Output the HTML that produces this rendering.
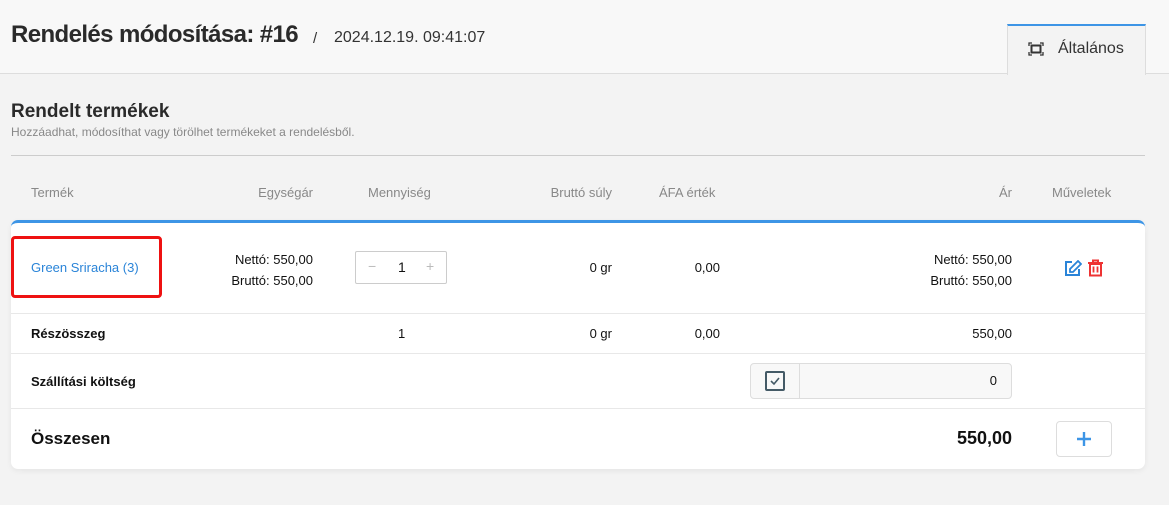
<!DOCTYPE html>
<html><head><meta charset="utf-8"><style>
*{box-sizing:border-box;margin:0;padding:0}
body{width:1169px;height:505px;background:#f3f3f3;font-family:"Liberation Sans",Arial,sans-serif;color:#222;position:relative;overflow:hidden}
.a{position:absolute;white-space:nowrap}
.r{text-align:right}
</style></head><body>
<div class="a" style="left:0;top:0;width:1169px;height:74px;background:#f8f8f8;border-bottom:1px solid #ddd"></div>
<div class="a" style="left:11px;top:21px;font-size:24px;font-weight:bold;color:#2a2a2a;letter-spacing:-0.6px">Rendelés módosítása: #16</div>
<div class="a" style="left:313px;top:30px;font-size:15px;color:#333">/</div>
<div class="a" style="left:334px;top:29px;font-size:16px;color:#333">2024.12.19. 09:41:07</div>
<div class="a" style="left:1007px;top:24px;width:139px;height:51px;background:#f3f3f3;border-top:2px solid #3d95e6;border-left:1px solid #ddd;border-right:1px solid #ddd"></div>
<svg class="a" style="left:1028px;top:42px" width="16" height="14" viewBox="0 0 16 14"><path d="M1 4V1h3M12 1h3v3M15 10v3h-3M4 13H1v-3" fill="none" stroke="#333" stroke-width="1.3"/><rect x="3.5" y="3.5" width="9" height="7" fill="none" stroke="#333" stroke-width="2"/></svg>
<div class="a" style="left:1058px;top:40px;font-size:16px;color:#333">Általános</div>
<div class="a" style="left:11px;top:101px;font-size:19px;font-weight:bold;color:#2a2a2a">Rendelt termékek</div>
<div class="a" style="left:11px;top:125px;font-size:12px;color:#888">Hozzáadhat, módosíthat vagy törölhet termékeket a rendelésből.</div>
<div class="a" style="left:11px;top:155px;width:1134px;height:1px;background:#ccc"></div>
<div class="a" style="left:31px;top:185px;font-size:13px;color:#888">Termék</div>
<div class="a r" style="left:200px;width:113px;top:185px;font-size:13px;color:#888">Egységár</div>
<div class="a" style="left:368px;top:185px;font-size:13px;color:#888">Mennyiség</div>
<div class="a r" style="left:500px;width:112px;top:185px;font-size:13px;color:#888">Bruttó súly</div>
<div class="a" style="left:659px;top:185px;font-size:13px;color:#888">ÁFA érték</div>
<div class="a r" style="left:900px;width:112px;top:185px;font-size:13px;color:#888">Ár</div>
<div class="a" style="left:1052px;top:185px;font-size:13px;color:#888">Műveletek</div>
<div class="a" style="left:11px;top:220px;width:1134px;height:249px;background:#fff;border-top:3px solid #3d95e6;border-radius:7px;box-shadow:0 2px 6px rgba(0,0,0,.06)"></div>
<div class="a" style="left:11px;top:313px;width:1134px;height:1px;background:#e8e8e8"></div>
<div class="a" style="left:11px;top:353px;width:1134px;height:1px;background:#e8e8e8"></div>
<div class="a" style="left:11px;top:408px;width:1134px;height:1px;background:#e8e8e8"></div>
<div class="a" style="left:11px;top:236px;width:151px;height:62px;border:3px solid #e11;border-radius:4px"></div>
<div class="a" style="left:31px;top:260px;font-size:13px;color:#2a84d8">Green Sriracha (3)</div>
<div class="a r" style="left:180px;width:133px;top:249px;font-size:13px;line-height:21px;color:#111">Nettó: 550,00<br>Bruttó: 550,00</div>
<div class="a" style="left:355px;top:251px;width:92px;height:33px;border:1px solid #ccc;border-radius:2px"></div>
<div class="a" style="left:368px;top:258px;font-size:14px;color:#bbb">−</div>
<div class="a" style="left:398px;top:259px;font-size:14px;color:#111">1</div>
<div class="a" style="left:426px;top:258px;font-size:14px;color:#bbb">+</div>
<div class="a r" style="left:500px;width:112px;top:260px;font-size:13px;color:#111">0 gr</div>
<div class="a r" style="left:620px;width:100px;top:260px;font-size:13px;color:#111">0,00</div>
<div class="a r" style="left:850px;width:162px;top:249px;font-size:13px;line-height:21px;color:#111">Nettó: 550,00<br>Bruttó: 550,00</div>
<svg class="a" style="left:1064px;top:260px" width="18" height="17" viewBox="0 0 18 17"><path d="M8 2H2v13h13V9" fill="none" stroke="#2a84d8" stroke-width="2"/><path d="M14 1l3 3-8 8H6V9z" fill="none" stroke="#2a84d8" stroke-width="1.8"/></svg>
<svg class="a" style="left:1087px;top:259px" width="17" height="18" viewBox="0 0 17 18"><path d="M1 4h15M6 4V1.5h5V4" fill="none" stroke="#e33" stroke-width="2"/><rect x="3" y="5" width="11" height="11.5" fill="none" stroke="#e33" stroke-width="2"/><path d="M6.5 7.5v6M10.5 7.5v6" stroke="#e33" stroke-width="1.8"/></svg>
<div class="a" style="left:31px;top:326px;font-size:13px;font-weight:bold;color:#111">Részösszeg</div>
<div class="a" style="left:398px;top:326px;font-size:13px;color:#111">1</div>
<div class="a r" style="left:500px;width:112px;top:326px;font-size:13px;color:#111">0 gr</div>
<div class="a r" style="left:620px;width:100px;top:326px;font-size:13px;color:#111">0,00</div>
<div class="a r" style="left:850px;width:162px;top:326px;font-size:13px;color:#111">550,00</div>
<div class="a" style="left:31px;top:374px;font-size:13px;font-weight:bold;color:#111">Szállítási költség</div>
<div class="a" style="left:750px;top:363px;width:262px;height:36px;background:#f8f8f8;border:1px solid #ddd;border-radius:4px"></div>
<div class="a" style="left:799px;top:364px;width:1px;height:34px;background:#ddd"></div>
<svg class="a" style="left:765px;top:371px" width="20" height="20" viewBox="0 0 20 20"><rect x="1" y="1" width="18" height="18" rx="1" fill="none" stroke="#445a66" stroke-width="2"/><path d="M6 10l3 3 5-6" fill="none" stroke="#445a66" stroke-width="1.6"/></svg>
<div class="a r" style="left:900px;width:97px;top:373px;font-size:13px;color:#111">0</div>
<div class="a" style="left:31px;top:429px;font-size:17px;font-weight:bold;color:#111">Összesen</div>
<div class="a r" style="left:850px;width:162px;top:428px;font-size:18px;font-weight:bold;color:#111">550,00</div>
<div class="a" style="left:1056px;top:421px;width:56px;height:36px;border:1px solid #ddd;border-radius:4px;background:#fff"></div>
<svg class="a" style="left:1076px;top:431px" width="16" height="16" viewBox="0 0 16 16"><path d="M8 1v14M1 8h14" stroke="#3d95e6" stroke-width="2.4"/></svg>
</body></html>
